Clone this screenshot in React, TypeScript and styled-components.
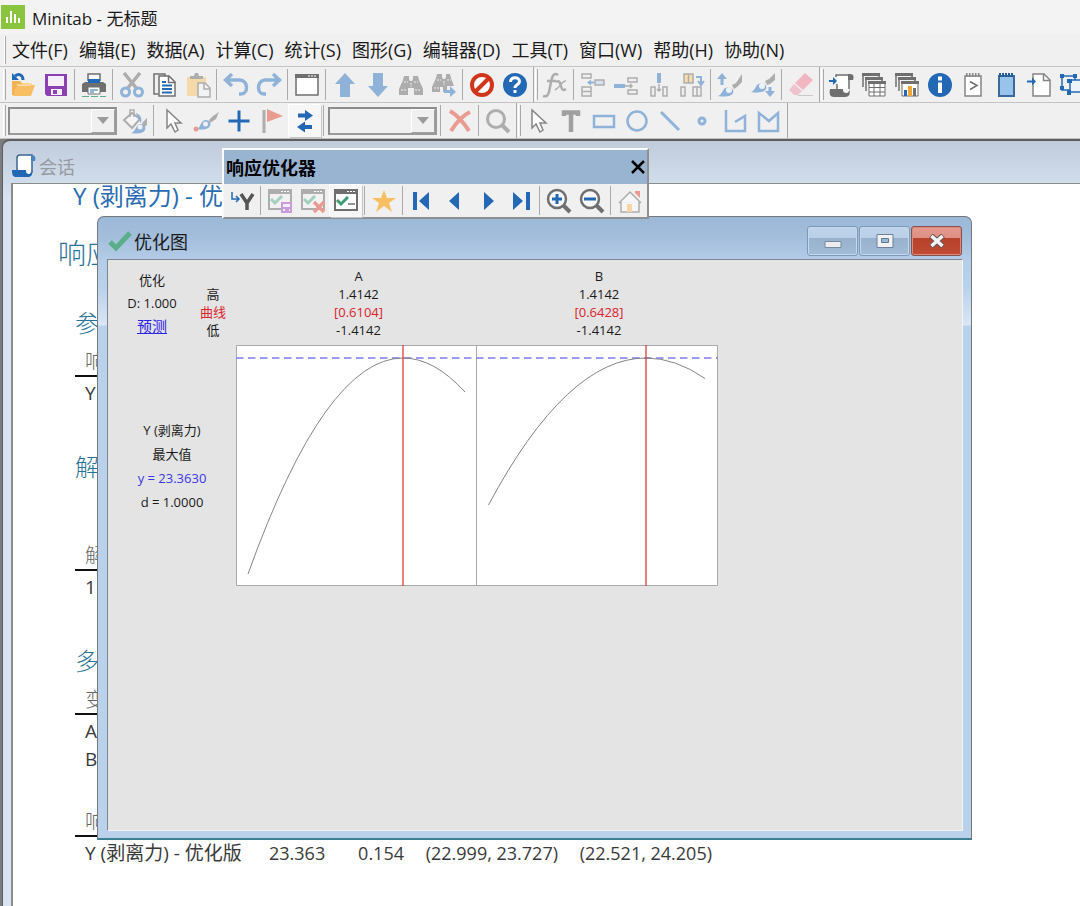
import React from "react";
import styled, { createGlobalStyle, css } from "styled-components";

const GlobalStyle = createGlobalStyle`
  * { box-sizing: border-box; }
  html, body { margin: 0; padding: 0; }
  body {
    font-family: "Open Sans", "Noto Sans CJK SC", sans-serif;
    background: #f0f0f0;
    color: #1a1a1a;
    overflow-x: hidden;
  }
  h1, h2, h3, p { margin: 0; font-weight: 400; }
  button { font: inherit; padding: 0; border: 0; background: none; color: inherit; }
`;

/* ---------- colours ---------- */
const BLUE = "#2368b4";
const SOFT_BLUE = "#8fb2d8";
const GREY = "#6f6f6f";
const SOFT_GREY = "#adadad";
const GREEN = "#5aae8a";
const RED = "#d0361b";
const SOFT_RED = "#e99b92";
const ORANGE = "#f8bf62";

/* ---------- application frame ---------- */
const Page = styled.div`
  display: flex;
  flex-direction: column;
  min-height: 100vh;
  overflow: hidden;
`;

const AppTitle = styled.header`
  display: flex;
  align-items: center;
  gap: 7px;
  height: 34px;
  padding-left: 1px;
  background: #f3f3f3;
  font-size: 17px;
`;

const MenuBar = styled.nav`
  display: flex;
  align-items: center;
  gap: 11px;
  height: 33px;
  padding-left: 4px;
  border-bottom: 1px solid #c4c4c4;
  white-space: nowrap;
`;

const MenuButton = styled.button`
  font-size: 18px;
  line-height: 30px;
`;

const Grip = styled.span`
  flex: none;
  align-self: stretch;
  width: 3px;
  margin: 2px 0;
  border-left: 1px solid #fff;
  border-right: 1px solid #a8a8a8;
`;

const MenuGrip = styled(Grip)`
  width: 2px;
  margin-right: -5px;
`;

const ToolRow = styled.div`
  display: flex;
  height: 36px;
  padding-left: 3px;
  border-bottom: 1px solid #c4c4c4;
`;

const Band = styled.div<{ $open?: boolean }>`
  display: flex;
  flex: none;
  align-items: center;
  gap: 1px;
  margin-right: 1px;
  padding-right: 2px;
  border-right: ${(p) => (p.$open ? "0" : "1px solid #a8a8a8")};
`;

const ToolButton = styled.button<{ $pressed?: boolean }>`
  display: flex;
  flex: none;
  align-items: center;
  justify-content: center;
  width: 32px;
  height: 32px;
  ${(p) =>
    p.$pressed &&
    css`
      background: #f7f7f7;
      box-shadow: 1px 1px 0 #c4c4c4, -1px -1px 0 #fff;
    `}
`;

const Separator = styled.span`
  flex: none;
  align-self: stretch;
  width: 1px;
  margin: 2px 2px 2px 1px;
  background: #aaa;
`;

const ComboBox = styled.span`
  position: relative;
  flex: none;
  width: 109px;
  height: 28px;
  margin: 0 1px;
  border: 2px solid;
  border-color: #8c8c8c #9a9a9a #9a9a9a #8c8c8c;
`;

const ComboSelect = styled.select`
  width: 100%;
  height: 100%;
  border: 0;
  appearance: none;
  background: #f0f0f0;
`;

const ComboArrow = styled.span`
  position: absolute;
  top: 0;
  right: 0;
  display: flex;
  align-items: center;
  justify-content: center;
  width: 24px;
  height: 24px;
  border: 1px solid;
  border-color: #fff #a0a0a0 #a0a0a0 #fff;
  background: #f0f0f0;
  pointer-events: none;
`;

/* ---------- workspace and session window ---------- */
const Workspace = styled.main`
  position: relative;
  display: flex;
  flex: 1;
  padding-left: 2px;
  background: #7d7d7d;
`;

const SessionWindow = styled.section`
  display: flex;
  flex: 1;
  flex-direction: column;
  min-width: 0;
  padding-left: 8px;
  border: 1px solid #5e5e5e;
  border-width: 2px 0 0 1px;
  border-radius: 8px 0 0 0;
  background: linear-gradient(#c0ccdb, #d7e4f2 60px);
`;

const SessionTitle = styled.header`
  display: flex;
  align-items: center;
  gap: 2px;
  height: 42px;
  padding-top: 8px;
  font-size: 18px;
  color: #969ba3;
`;

const SessionBody = styled.div`
  flex: 1;
  padding: 0 0 30px 62px;
  border: 1px solid #8b8b8b;
  border-width: 1px 0 0 2px;
  background: #fff;
  white-space: nowrap;
`;

const ReportSubject = styled.p`
  margin-left: -2px;
  font-size: 24px;
  line-height: 24px;
  color: #2a6bb2;
`;

const ReportTitle = styled.h1`
  margin: 27px 0 36px -17px;
  font-size: 28px;
  font-weight: 300;
  line-height: 36px;
  color: #2a7398;
`;

const ReportHeading = styled.h2<{ $space?: number }>`
  margin-top: ${(p) => p.$space ?? 0}px;
  font-size: 24px;
  font-weight: 300;
  line-height: 32px;
  color: #2a7398;
`;

const ReportTable = styled.table<{ $space: number }>`
  width: 647px;
  margin-top: ${(p) => p.$space}px;
  table-layout: fixed;
  border-collapse: separate;
  border-spacing: 0;
  color: #3a3a3a;
  th {
    height: 28px;
    padding: 0 10px;
    border-bottom: 2px solid #111;
    font-size: 20px;
    font-weight: 300;
    line-height: 26px;
    text-align: left;
    color: #666;
  }
  td {
    height: 28px;
    padding: 4px 10px 0;
    font-size: 18px;
    line-height: 24px;
    text-align: right;
  }
  td:first-child {
    font-size: 19px;
    text-align: left;
  }
`;

/* ---------- floating toolbar ---------- */
const Palette = styled.section`
  position: absolute;
  z-index: 2;
  top: 9px;
  left: 222px;
  border: 2px solid;
  border-color: #fafafa #8f8f8f #8f8f8f #fafafa;
  background: #f0f0f0;
`;

const PaletteTitle = styled.header`
  display: flex;
  align-items: center;
  justify-content: space-between;
  height: 34px;
  padding: 0 2px;
  background: #99b4d1;
  font-size: 18px;
  font-weight: 700;
  color: #000;
`;

const PaletteTools = styled.div`
  display: flex;
  align-items: center;
  gap: 1px;
  height: 33px;
  padding: 0 1px 0 2px;
`;

/* ---------- optimization plot window ---------- */
const PlotWindow = styled.section`
  position: absolute;
  z-index: 1;
  top: 77px;
  left: 97px;
  width: 875px;
  padding: 0 8px 7px 9px;
  border: 1px solid #75787c;
  border-bottom: 2px solid #3d7f93;
  border-radius: 7px 7px 0 0;
  background:
    linear-gradient(#9bb8d7 0, #a3bedb 20px, #b4cde9 44px, #b9d1ea 70px, #d9e6f5 108px, #b9d1ea 109px);
`;

const PlotTitle = styled.header`
  display: flex;
  align-items: center;
  gap: 2px;
  height: 42px;
  padding: 6px 1px 0 0;
  font-size: 18px;
`;

const WindowButtons = styled.div`
  display: flex;
  gap: 1px;
  margin-left: auto;
`;

const WindowButton = styled.button<{ $close?: boolean }>`
  display: flex;
  align-items: center;
  justify-content: center;
  width: 51px;
  height: 30px;
  border: 1px solid ${(p) => (p.$close ? "#86504f" : "#7e99b8")};
  border-radius: 3px;
  box-shadow: inset 0 0 0 1px ${(p) => (p.$close ? "#dd897c" : "#c6d9ec")};
  background: ${(p) =>
    p.$close
      ? "linear-gradient(#e39a8e 0, #df8f83 40%, #b7412b 41%, #c04c34 100%)"
      : "linear-gradient(#c0d4ea 0, #b9d0e8 40%, #98b1cc 41%, #a2bbd6 100%)"};
`;

const PlotClient = styled.div`
  min-height: 572px;
  border: 1px solid;
  border-color: #7f858e #f4f4f4 #f4f4f4 #7f858e;
  background: #e4e4e4;
  font-size: 13px;
`;

const FactorGrid = styled.div`
  display: grid;
  grid-template-columns: 88px 42px 241px 240px;
  height: 85px;
  text-align: center;
  line-height: 18px;
`;

const Desirability = styled.div`
  padding-top: 9px;
  line-height: 23px;
`;

const RowNames = styled.div`
  padding: 25px 8px 0 0;
`;

const Factor = styled.div`
  padding-top: 7px;
`;

const Current = styled.p`
  color: #d8232a;
`;

const PredictLink = styled.a`
  font-size: 15px;
  color: #2b22e6;
`;

const ResponseRow = styled.div`
  display: flex;
`;

const ResponseInfo = styled.div`
  width: 128px;
  padding-top: 73px;
  text-align: center;
  line-height: 24px;
`;

const Fitted = styled.p`
  color: #3a35e8;
`;

/* ---------- icons, all on a 26px grid ---------- */
const Svg = ({ children, size = 26 }: { children: React.ReactNode; size?: number }) => (
  <svg width={size} height={size} viewBox="0 0 26 26" fill="none" aria-hidden="true">
    {children}
  </svg>
);

const icons: Record<string, React.ReactNode> = {
  open: (
    <>
      <path d="M2 23V9h8l2 2h10v4H8l-3 8z" fill="#f2b354" />
      <path d="M7 13h18l-4 11H3z" fill={ORANGE} />
      <path d="M7 13h14v-2h-9" stroke="#fff4df" />
      <path d="M5 4c4-3 8-1 8 4" stroke={BLUE} strokeWidth="3" />
      <path d="M2 1v7h7z" fill={BLUE} />
    </>
  ),
  save: (
    <>
      <path d="M2 2h22v22H4l-2-2z" fill="#8a3fb5" />
      <path d="M5 4h16v10H5zM8 17h11v6H8z" fill="#f4eef8" />
      <path d="M10 18h4v4h-4z" fill="#8a3fb5" />
    </>
  ),
  print: (
    <>
      <path d="M7 9V2h12v7" stroke={GREY} strokeWidth="1.500" fill="#f6f6f6" />
      <path d="M1 12l3-2h18l3 2v8H1z" fill={GREY} />
      <path d="M7 7h12v4H7z" fill={BLUE} />
      <path d="M7 15h12v7H7z" fill="#fff" stroke={GREY} />
      <path d="M9 18h8M9 20h4" stroke={BLUE} />
      <path d="M1 24.500h24" stroke={GREEN} strokeDasharray="7 2" />
    </>
  ),
  cut: (
    <>
      <path d="M5 1l13 16M21 1L8 17" stroke={SOFT_GREY} strokeWidth="3.500" />
      <circle cx="6.500" cy="20" r="4" stroke={SOFT_BLUE} strokeWidth="3" />
      <circle cx="19.500" cy="20" r="4" stroke={SOFT_BLUE} strokeWidth="3" />
    </>
  ),
  copy: (
    <>
      <path d="M6 22H2V2h11v3" stroke={GREY} strokeWidth="1.500" />
      <path d="M7 4h10l6 6v14H7z" fill="#fff" stroke={GREY} strokeWidth="1.500" />
      <path d="M16.500 4v6.500H23" stroke={GREY} strokeWidth="1.500" />
      <path d="M10 10h4M10 13.500h10M10 17h10M10 20.500h10" stroke={BLUE} strokeWidth="2" />
    </>
  ),
  paste: (
    <>
      <path d="M2 5h19v19H2z" fill="#f4d9ab" />
      <path d="M5 7V4h4l1-3h3l1 3h4v3z" fill={SOFT_GREY} />
      <path d="M13 11h7l5 5v9H13z" fill="#f3f3f3" stroke={SOFT_GREY} strokeWidth="1.500" />
      <path d="M19 11v6h6" stroke={SOFT_GREY} strokeWidth="1.500" />
    </>
  ),
  undo: <path d="M9 2L2.500 8 9 14M3 8h14c9 1 8 14 1 14h-2" stroke={SOFT_BLUE} strokeWidth="3.500" />,
  redo: <path d="M17 2l6.500 6-6.500 6M23 8H9C0 9 1 22 8 22h2" stroke={SOFT_BLUE} strokeWidth="3.500" />,
  window: (
    <>
      <path d="M2 3h22v20H2z" fill="#fff" stroke={GREY} strokeWidth="1.500" />
      <path d="M1 2h24v4H1z" fill={GREY} />
      <path d="M14 4h9" stroke="#fff" strokeDasharray="2 1" />
    </>
  ),
  up: <path d="M13 1l10 11h-5v13H8V12H3z" fill={SOFT_BLUE} />,
  down: <path d="M13 25L3 14h5V1h10v13h5z" fill={SOFT_BLUE} />,
  find: (
    <>
      <path d="M6 4h5v3l1 2h2l1-2V4h5l1 4 4 9v6h-9v-7h-6v7H1v-6l4-9z" fill={SOFT_GREY} />
      <path d="M3 18h6M17 18h6M6 10h4M16 10h4M13 11v4" stroke="#f0f0f0" strokeDasharray="2 1" />
    </>
  ),
  findNext: (
    <>
      <path d="M6 2h5v3l1 2h2l1-2V2h4l1 4 3 8h-7v6h-4v-5h-3v5H1v-5l4-9z" fill={SOFT_GREY} />
      <path d="M3 16h6M6 8h4M16 8h4M13 9v4" stroke="#f0f0f0" strokeDasharray="2 1" />
      <path d="M13 18h6v-4l6 6-6 5v-4h-6z" fill={SOFT_BLUE} />
    </>
  ),
  cancel: (
    <>
      <circle cx="13" cy="13" r="10" stroke={RED} strokeWidth="4" fill="#fff" />
      <path d="M6 20L20 6" stroke={RED} strokeWidth="4" />
    </>
  ),
  help: (
    <>
      <circle cx="13" cy="13" r="12" fill={BLUE} />
      <path d="M8.500 10c0-6 9-5.500 9-.500 0 3-4.500 3-4.500 6.500" stroke="#fff" strokeWidth="3" />
      <path d="M11.500 18h3v3h-3z" fill="#fff" />
    </>
  ),
  fx: (
    <>
      <path d="M16 3c-4-3-6 1-7 7L7 20c-1 4-3 5-6 4M5 9h9" stroke={SOFT_GREY} strokeWidth="2.500" />
      <path d="M14 10c3-2 4 0 5 4s2 5 5 3" stroke={SOFT_GREY} strokeWidth="2.500" />
      <path d="M24 9c-4-1-5 6-11 9" stroke={SOFT_GREY} strokeWidth="1.500" />
    </>
  ),
  insertRow: (
    <>
      <path d="M2 2h9v4H2zM2 15h9v9H2zM2 19.500h9" stroke={SOFT_GREY} strokeWidth="1.500" />
      <path d="M15 8h9v5h-9z" fill="#d4e2f2" stroke={SOFT_GREY} strokeWidth="1.500" />
      <path d="M14 10.500H9" stroke={SOFT_BLUE} strokeWidth="2" />
      <path d="M7 10.500l4-3v6z" fill={SOFT_BLUE} />
    </>
  ),
  moveRow: (
    <>
      <path d="M1 12h11v4H1z" fill={SOFT_BLUE} />
      <path d="M15 6h9v4h-9zM15 18h9v4h-9zM12 14h7M17 12l2 2-2 2" stroke={SOFT_GREY} strokeWidth="1.500" />
    </>
  ),
  moveColumn: (
    <>
      <path d="M11 1h4v10h-4z" fill={SOFT_BLUE} />
      <path d="M5 15h4v9H5zM17 15h4v9h-4zM13 12v7M11 17l2 2 2-2" stroke={SOFT_GREY} strokeWidth="1.500" />
    </>
  ),
  columns: (
    <>
      <path d="M5 2h9v9H5zM9.500 2v9" fill="#f7dcae" stroke={SOFT_GREY} strokeWidth="1.500" />
      <path d="M2 15h4v9H2zM14 15h8v9h-8zM18 15v9" stroke={SOFT_GREY} strokeWidth="1.500" />
      <path d="M17 5h5v7M19 9l3 4 3-4" stroke={SOFT_BLUE} strokeWidth="2" />
    </>
  ),
  brushUp: (
    <>
      <path d="M5 13V5" stroke={SOFT_BLUE} strokeWidth="3" />
      <path d="M0 7l5-6 5 6z" fill={SOFT_BLUE} />
      <path d="M1 24c3-1 4-4 6-7 4-4 11-1 9 4-2 4-9 4-15 3z" fill={SOFT_BLUE} />
      <circle cx="12" cy="18" r="3" fill="#edf2f7" />
      <path d="M15 13l4-2 6-9v8l-5 5-3 2z" fill={SOFT_GREY} />
    </>
  ),
  brushDown: (
    <>
      <path d="M1 20c3-1 4-4 6-7 4-4 11-1 9 4-2 4-9 4-15 3z" fill={SOFT_BLUE} />
      <circle cx="12" cy="14" r="3" fill="#edf2f7" />
      <path d="M15 9l4-2 6-6v7l-5 4-3 1z" fill={SOFT_GREY} />
      <path d="M20 15v6" stroke={SOFT_BLUE} strokeWidth="3" />
      <path d="M15 19h10l-5 6z" fill={SOFT_BLUE} />
    </>
  ),
  eraser: (
    <>
      <path d="M17 1l8 7-10 10-8-7z" fill="#f2b5c2" />
      <path d="M6 12l8 7-4 4H6l-5-5z" fill="#eec3cc" />
      <path d="M10 23.500h15" stroke="#c9c9c9" />
    </>
  ),
  script: (
    <>
      <path d="M9 4h12v16H9z" fill="#fff" />
      <path d="M8 5V3h14M9 12v6M21 3v14" stroke={GREY} strokeWidth="1.500" />
      <path d="M20 2h2c4 0 4 3 3 6h-5z" fill={GREY} />
      <path d="M2 17h13c0 3 1 4 3 4 3 0 3-2 3-4 2 5 0 8-4 8H6c-4 0-5-3-4-8z" fill={GREY} />
      <path d="M1 9h5" stroke={BLUE} strokeWidth="2" />
      <path d="M5 5l4 4-4 4z" fill={BLUE} />
    </>
  ),
  sheets: (
    <>
      <path d="M2 15V2h16v3M5 19V6h16v3" stroke={GREY} strokeWidth="1.500" />
      <path d="M1 1h18v3H1zM4 5h18v3H4z" fill={GREY} />
      <path d="M8 11h16v13H8zM8 15.500h16M8 20h16M13 11v13M19 11v13" fill="#fff" stroke={GREY} />
      <path d="M7 9h18v3H7z" fill={GREY} />
    </>
  ),
  graphs: (
    <>
      <path d="M2 15V2h16v3M5 19V6h16v3" stroke={GREY} strokeWidth="1.500" />
      <path d="M1 1h18v3H1zM4 5h18v3H4z" fill={GREY} />
      <path d="M8 10h16v14H8z" fill="#fff" stroke={GREY} />
      <path d="M7 9h18v3H7z" fill={GREY} />
      <path d="M10 18h3v6h-3z" fill={BLUE} />
      <path d="M14 14h4v10h-4z" fill="#f2a63a" />
      <path d="M19 16h3v8h-3z" fill={GREY} />
    </>
  ),
  info: (
    <>
      <circle cx="13" cy="13" r="12" fill={BLUE} />
      <path d="M11 4.500h4v4h-4zM11 10.500h4v10.500h-4z" fill="#fff" />
    </>
  ),
  console: (
    <>
      <path d="M5 4h16v20H5z" fill="#fff" stroke="#858585" strokeWidth="1.500" />
      <path d="M6 3h15" stroke="#858585" strokeWidth="4" strokeDasharray="1.500 1.500" />
      <path d="M10 9.500l7 4-7 4" stroke={GREY} strokeWidth="1.500" />
    </>
  ),
  notebook: (
    <>
      <path d="M6 4h15v20H6z" fill="#98c3ea" stroke="#3a6a9c" strokeWidth="2" />
      <path d="M6 3h15" stroke="#225c96" strokeWidth="4" strokeDasharray="2 1" />
    </>
  ),
  newPage: (
    <>
      <path d="M7 2h11l6 6v16H7z" fill="#fff" stroke="#858585" strokeWidth="1.500" />
      <path d="M17.500 2v6.500H24" stroke="#858585" strokeWidth="1.500" />
      <path d="M1 9.500h6" stroke={BLUE} strokeWidth="2" />
      <path d="M6 5.500l4 4-4 4z" fill={BLUE} />
    </>
  ),
  shapes: (
    <>
      <path d="M3 4h13v14H3z" stroke={BLUE} strokeWidth="1.500" />
      <path d="M11 8h12v12H11z" fill="#eef3f9" stroke={BLUE} strokeWidth="1.500" />
      <path d="M1 2h4v4H1zM14 2h4v4h-4zM1 14h4v4H1zM8 7h5v4H8zM8 18h4v5H8zM21 6h4v4h-4zM21 18h4v5h-4z" fill={BLUE} />
    </>
  ),
  fill: (
    <>
      <path d="M2 12l8-7 8 6-8 9z" fill="#f5f5f5" stroke={SOFT_GREY} strokeWidth="2" />
      <path d="M8 9V2h4v7" stroke={SOFT_GREY} strokeWidth="1.500" />
      <path d="M14 5c5 2 6 5 5 10l-3-4z" fill={SOFT_BLUE} />
      <path d="M9 25c4-1 4-5 7-8 4-3 9 1 7 5-2 4-9 4-14 3z" fill={SOFT_BLUE} />
      <circle cx="18" cy="19" r="2.500" fill="#f0f0f0" />
      <path d="M20 15l5-5v7l-3 2z" fill={SOFT_GREY} />
    </>
  ),
  cursor: <path d="M7 2v18l4-4 4 8 3-2-3-7h6z" fill="#fff" stroke="#858585" strokeWidth="1.500" />,
  brush: (
    <>
      <path d="M4 21c3-1 3-5 6-8 4-3 9 1 7 5-2 4-8 4-13 3z" fill={SOFT_BLUE} />
      <circle cx="12.500" cy="16" r="2.500" fill="#f0f0f0" />
      <path d="M16 12l4-4 6-4-3 7-6 4z" fill={SOFT_GREY} />
      <circle cx="3" cy="21" r="2.500" fill={SOFT_RED} />
    </>
  ),
  plus: <path d="M13 2.500v21M2.500 13h21" stroke={BLUE} strokeWidth="3" />,
  flag: (
    <>
      <path d="M5 2v23" stroke={SOFT_GREY} strokeWidth="3" />
      <path d="M8 1l16 7-16 6z" fill={SOFT_RED} />
    </>
  ),
  swap: (
    <>
      <path d="M6 7.500h9M11 19h9" stroke={BLUE} strokeWidth="4" />
      <path d="M13 2l8 5.500-8 5.500zM13 13.500v11L5 19z" fill={BLUE} />
    </>
  ),
  remove: <path d="M3 3c7 4 14 12 19 20M23 4C14 8 9 15 4 23" stroke={SOFT_RED} strokeWidth="4" />,
  search: (
    <>
      <circle cx="11" cy="11" r="8.500" stroke={SOFT_GREY} strokeWidth="3" />
      <path d="M17 17l7 7" stroke={SOFT_GREY} strokeWidth="4" />
    </>
  ),
  text: <path d="M6 8V4.500h14V8M13 3v21" stroke="#a0a0a0" strokeWidth="4.500" />,
  rect: <path d="M3 8h20v11H3z" stroke={SOFT_BLUE} strokeWidth="2.500" />,
  circle: <circle cx="13" cy="13" r="9.500" stroke={SOFT_BLUE} strokeWidth="2.500" />,
  line: <path d="M4 4l18 18" stroke={SOFT_BLUE} strokeWidth="3" />,
  dot: <circle cx="12" cy="13" r="3" stroke={SOFT_BLUE} strokeWidth="3" />,
  polyline: <path d="M3 2v21h19V8l-10 6" stroke={SOFT_BLUE} strokeWidth="2.500" />,
  polygon: <path d="M3 5v18h19V5l-9 8z" stroke={SOFT_BLUE} strokeWidth="2.500" />,
  response: (
    <>
      <path d="M3 4v7h6M7 8l3 3-3 3" stroke={BLUE} strokeWidth="1.500" />
      <path d="M12 6l6 9 6-9M18 14v8" stroke="#555" strokeWidth="3.500" />
    </>
  ),
  planSave: (
    <>
      <path d="M2 3h22v18H2z" fill="#f2f2f2" stroke={SOFT_GREY} strokeWidth="2" />
      <path d="M1 1h24v5H1z" fill={SOFT_GREY} />
      <path d="M14 3.500h9" stroke="#fff" strokeDasharray="2 1" />
      <path d="M4 11l4 4 7-7" stroke="#a2d0bd" strokeWidth="3" />
      <path d="M15 15h9v9h-9z" fill="#f4eef8" stroke="#c79bdc" strokeWidth="2" />
      <path d="M15 19h9v2h-9zM18 21h4v3h-4z" fill="#c79bdc" />
    </>
  ),
  planDelete: (
    <>
      <path d="M2 3h22v18H2z" fill="#f2f2f2" stroke={SOFT_GREY} strokeWidth="2" />
      <path d="M1 1h24v5H1z" fill={SOFT_GREY} />
      <path d="M14 3.500h9" stroke="#fff" strokeDasharray="2 1" />
      <path d="M4 11l4 4 7-7" stroke="#a2d0bd" strokeWidth="3" />
      <path d="M14 14l10 10M24 14L14 24" stroke={SOFT_RED} strokeWidth="3.500" />
    </>
  ),
  plan: (
    <>
      <path d="M2 3h22v19H2z" fill="#fff" stroke={GREY} strokeWidth="2" />
      <path d="M1 1h24v5H1z" fill={GREY} />
      <path d="M14 3.500h9" stroke="#fff" strokeDasharray="2 1" />
      <path d="M4 12l4 4 7-7" stroke="#3d9c72" strokeWidth="3" />
      <path d="M15 16h7" stroke={GREY} strokeWidth="1.500" />
    </>
  ),
  star: <path d="M13 2l3 8h9l-7 5 3 9-8-6-8 6 3-9-7-5h9z" fill={ORANGE} />,
  first: <path d="M4 4h4v18H4zM20 4v18L10 13z" fill={BLUE} />,
  prev: <path d="M17 4v18L7 13z" fill={BLUE} />,
  next: <path d="M9 4v18l10-9z" fill={BLUE} />,
  last: <path d="M5 4v18l10-9zM18 4h4v18h-4z" fill={BLUE} />,
  zoomIn: (
    <>
      <circle cx="11" cy="11" r="9" stroke={GREY} strokeWidth="2.500" fill="#f7f7f7" />
      <path d="M17 17l7 7" stroke={GREY} strokeWidth="4" />
      <path d="M11 6v10M6 11h10" stroke={BLUE} strokeWidth="3" />
    </>
  ),
  zoomOut: (
    <>
      <circle cx="11" cy="11" r="9" stroke={GREY} strokeWidth="2.500" fill="#f7f7f7" />
      <path d="M17 17l7 7" stroke={GREY} strokeWidth="4" />
      <path d="M5 11h12" stroke={BLUE} strokeWidth="3" />
    </>
  ),
  home: (
    <>
      <path d="M18 3h5v7l-5-5z" fill={SOFT_RED} />
      <path d="M2 15L13 4l11 11M4 14v10h18V14" stroke={SOFT_GREY} strokeWidth="1.500" fill="#f6f6f6" />
      <path d="M10 16h5v8h-5z" fill="#f6d6a4" />
    </>
  ),
};

type Tool = [name: string, label: string] | "|";

const Tools = ({ items, pressed }: { items: Tool[]; pressed?: string }) => (
  <>
    {items.map((item, i) =>
      item === "|" ? (
        <Separator key={i} />
      ) : (
        <ToolButton key={i} type="button" aria-label={item[1]} $pressed={item[0] === pressed}>
          <Svg>{icons[item[0]]}</Svg>
        </ToolButton>
      )
    )}
  </>
);

const Combo = ({ label }: { label: string }) => (
  <ComboBox>
    <ComboSelect aria-label={label} />
    <ComboArrow>
      <svg width="12" height="7" viewBox="0 0 12 7" aria-hidden="true">
        <path d="M0 0h12L6 7z" fill="#9a9a9a" />
      </svg>
    </ComboArrow>
  </ComboBox>
);

const menus = [
  "文件(F)", "编辑(E)", "数据(A)", "计算(C)", "统计(S)", "图形(G)",
  "编辑器(D)", "工具(T)", "窗口(W)", "帮助(H)", "协助(N)",
];

const fileTools: Tool[] = [
  ["open", "打开"], ["save", "保存"], "|", ["print", "打印"], "|",
  ["cut", "剪切"], ["copy", "复制"], ["paste", "粘贴"], "|",
  ["undo", "撤消"], ["redo", "重做"], "|", ["window", "对话框"], "|",
  ["up", "上一个"], ["down", "下一个"], ["find", "查找"], ["findNext", "查找下一个"], "|",
  ["cancel", "取消"], ["help", "帮助"],
];
const dataTools: Tool[] = [
  ["fx", "公式"], "|", ["insertRow", "插入单元格"], ["moveRow", "插入行"],
  ["moveColumn", "插入列"], ["columns", "移动列"], "|",
  ["brushUp", "上一刷亮行"], ["brushDown", "下一刷亮行"], "|", ["eraser", "清除"],
];
const viewTools: Tool[] = [
  ["script", "会话"], ["sheets", "工作表"], ["graphs", "图形"], ["info", "信息"],
  ["console", "历史记录"], ["notebook", "报表板"], ["newPage", "相关文档"], ["shapes", "设计"],
];
const editTools: Tool[] = [
  ["cursor", "选择"], ["brush", "刷亮"], ["plus", "十字"], ["flag", "标记"], ["swap", "切换"], "|",
];
const drawTools: Tool[] = [
  ["cursor", "指针"], ["text", "文本"], ["rect", "矩形"], ["circle", "椭圆"],
  ["line", "直线"], ["dot", "标记点"], ["polyline", "折线"], ["polygon", "多边形"],
];
const optimizerTools: Tool[] = [
  ["response", "响应"], "|", ["planSave", "保存设置"], ["planDelete", "删除设置"], ["plan", "设置"], "|",
  ["star", "最优"], "|", ["first", "第一个"], ["prev", "前一个"], ["next", "后一个"], ["last", "最后"], "|",
  ["zoomIn", "放大"], ["zoomOut", "缩小"], "|", ["home", "重置"],
];

const Profile = () => (
  <svg width="482" height="241" viewBox="0 0 482 241" fill="none" role="img" aria-label="优化图">
    <path d="M.5.5h481v240H.5z" fill="#fff" stroke="#a9a9a9" />
    <path d="M240.500 0v241" stroke="#a9a9a9" />
    <path d="M0 13h482" stroke="#7d7bf0" strokeWidth="1.500" strokeDasharray="7.500 4.500" />
    <path d="M12 229Q89.500 13 167 13Q198 13 229 47" stroke="#858585" />
    <path d="M252.500 160Q331 13 410 13Q439.500 13 469 33.500" stroke="#858585" />
    <path d="M167 0v241M410 0v241" stroke="#e23a3a" strokeWidth="1.300" />
  </svg>
);

export default function App() {
  return (
    <Page>
      <GlobalStyle />
      <AppTitle>
        <svg width="24" height="24" viewBox="0 0 24 24" aria-hidden="true">
          <path d="M0 0h24v24H0z" fill="#8bc53f" />
          <path d="M6 12v6M10 6v12M14 9v9M18 13v5" stroke="#fff" strokeWidth="2" />
        </svg>
        <span>Minitab - 无标题</span>
      </AppTitle>
      <MenuBar>
        <MenuGrip />
        {menus.map((m) => (
          <MenuButton key={m} type="button">{m}</MenuButton>
        ))}
      </MenuBar>
      <ToolRow>
        <Band><Grip /><Tools items={fileTools} /></Band>
        <Band><Grip /><Tools items={dataTools} /></Band>
        <Band $open><Grip /><Tools items={viewTools} /></Band>
      </ToolRow>
      <ToolRow>
        <Band>
          <Grip />
          <Combo label="图形元素" />
          <Tools items={[["fill", "填充"], "|"]} />
          <Tools items={editTools} pressed="swap" />
          <Combo label="变量" />
          <Tools items={["|", ["remove", "删除"], "|", ["search", "缩放"]]} />
        </Band>
        <Band><Grip /><Tools items={drawTools} /></Band>
      </ToolRow>

      <Workspace>
        <SessionWindow>
          <SessionTitle>
            <svg width="26" height="26" viewBox="0 0 26 26" fill="none" aria-hidden="true">
              <path d="M6 18V5c0-2 1-3 3-3h12v17l-3 4z" fill="#fff" stroke="#3c6795" strokeWidth="1.500" />
              <path d="M20 2c4 0 5 2 4 6h-4z" fill="#4a83bf" />
              <path d="M1 17h14c0 3 1 4 3 4 3 0 3-2 3-4 1 5-1 7-4 7H5c-3 0-4-2-4-7z" fill={BLUE} />
            </svg>
            <span>会话</span>
          </SessionTitle>
          <SessionBody>
            <ReportSubject>Y (剥离力) - 优化版</ReportSubject>
            <ReportTitle>响应</ReportTitle>
            <ReportHeading>参数</ReportHeading>
            <ReportTable $space={10}>
              <thead><tr><th>响应</th></tr></thead>
              <tbody><tr><td>Y</td></tr></tbody>
            </ReportTable>
            <ReportHeading $space={46}>解</ReportHeading>
            <ReportTable $space={60}>
              <thead><tr><th>解</th></tr></thead>
              <tbody><tr><td>1</td></tr></tbody>
            </ReportTable>
            <ReportHeading $space={46}>多响应预测</ReportHeading>
            <ReportTable $space={10}>
              <thead><tr><th>变量</th></tr></thead>
              <tbody>
                <tr><td>A</td></tr>
                <tr><td>B</td></tr>
              </tbody>
            </ReportTable>
            <ReportTable $space={38}>
              <colgroup>
                <col width="184" /><col width="76" /><col width="79" /><col width="154" /><col width="154" />
              </colgroup>
              <thead><tr><th colSpan={5}>响应</th></tr></thead>
              <tbody>
                <tr>
                  <td>Y (剥离力) - 优化版</td>
                  <td>23.363</td>
                  <td>0.154</td>
                  <td>(22.999, 23.727)</td>
                  <td>(22.521, 24.205)</td>
                </tr>
              </tbody>
            </ReportTable>
          </SessionBody>
        </SessionWindow>

        <Palette>
          <PaletteTitle>
            <span>响应优化器</span>
            <button type="button" aria-label="关闭">
              <svg width="14" height="14" viewBox="0 0 14 14" aria-hidden="true">
                <path d="M1 1l12 12M13 1L1 13" stroke="#000" strokeWidth="2.500" />
              </svg>
            </button>
          </PaletteTitle>
          <PaletteTools>
            <Tools items={optimizerTools} pressed="plan" />
          </PaletteTools>
        </Palette>

        <PlotWindow>
          <PlotTitle>
            <svg width="25" height="24" viewBox="0 0 25 24" fill="none" aria-hidden="true">
              <path d="M3 13l6 6L23 4" stroke={GREEN} strokeWidth="5" />
            </svg>
            <span>优化图</span>
            <WindowButtons>
              <WindowButton type="button" aria-label="最小化">
                <svg width="18" height="14" viewBox="0 0 18 14" aria-hidden="true">
                  <path d="M1 7.500h16v6H1z" fill="#ececec" stroke="#768aa0" />
                </svg>
              </WindowButton>
              <WindowButton type="button" aria-label="最大化">
                <svg width="18" height="14" viewBox="0 0 18 14" aria-hidden="true">
                  <path d="M1 .5h16v13H1z" fill="#f2f2f2" stroke="#6c8098" />
                  <path d="M5.500 4.500h7v4h-7z" fill="#9cb8d4" stroke="#5f7890" />
                </svg>
              </WindowButton>
              <WindowButton type="button" aria-label="关闭" $close>
                <svg width="18" height="14" viewBox="0 0 18 14" aria-hidden="true">
                  <path d="M3 1.500l12 11M15 1.500l-12 11" stroke="#6b5658" strokeWidth="5.500" />
                  <path d="M3.500 2l11 10M14.500 2l-11 10" stroke="#f4f4f4" strokeWidth="3.500" />
                </svg>
              </WindowButton>
            </WindowButtons>
          </PlotTitle>
          <PlotClient>
            <FactorGrid>
              <Desirability>
                <p>优化</p>
                <p>D: 1.000</p>
                <PredictLink href="#predict">预测</PredictLink>
              </Desirability>
              <RowNames>
                <p>高</p>
                <Current>曲线</Current>
                <p>低</p>
              </RowNames>
              <Factor>
                <p>A</p>
                <p>1.4142</p>
                <Current>[0.6104]</Current>
                <p>-1.4142</p>
              </Factor>
              <Factor>
                <p>B</p>
                <p>1.4142</p>
                <Current>[0.6428]</Current>
                <p>-1.4142</p>
              </Factor>
            </FactorGrid>
            <ResponseRow>
              <ResponseInfo>
                <p>Y (剥离力)</p>
                <p>最大值</p>
                <Fitted>y = 23.3630</Fitted>
                <p>d = 1.0000</p>
              </ResponseInfo>
              <Profile />
            </ResponseRow>
          </PlotClient>
        </PlotWindow>
      </Workspace>
    </Page>
  );
}
